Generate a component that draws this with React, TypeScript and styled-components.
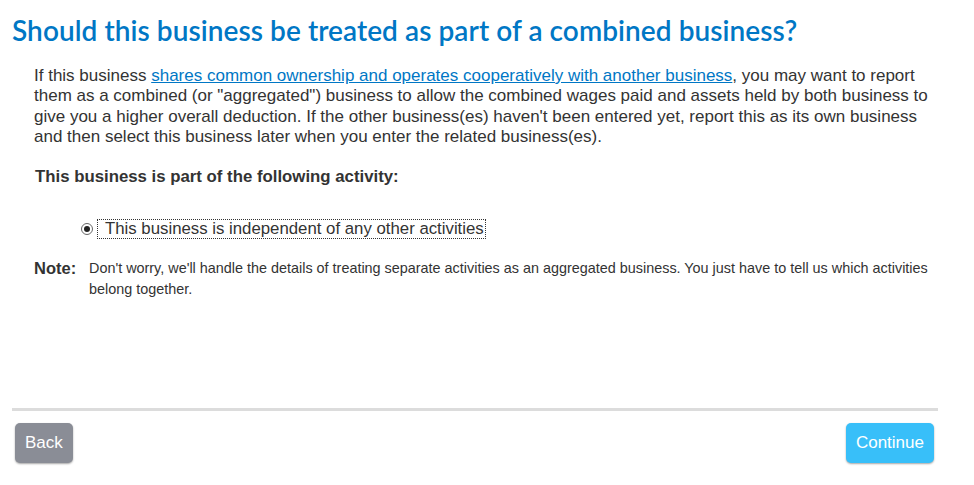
import React from "react";
import styled, { createGlobalStyle } from "styled-components";

const Global = createGlobalStyle`
  html, body { margin: 0; padding: 0; background: #fff; }
  body { font-family: "Liberation Sans", Arial, sans-serif; color: #333; }
`;

const Page = styled.div`
  width: 974px;
  height: 485px;
  box-sizing: border-box;
  padding: 14px 36px 0 12px;
  display: flex;
  flex-direction: column;
`;

const Title = styled.h1`
  margin: 0;
  font-family: "Lato", "Noto Sans", sans-serif;
  font-weight: 600;
  font-size: 28px;
  line-height: 32px;
  color: #0077c5;
  letter-spacing: 0.065px;
`;

const Body = styled.div`
  padding: 0 0 0 22px;
  margin-top: 20px;
  flex: 1;
`;

const Paragraph = styled.p`
  margin: 0;
  font-size: 17px;
  line-height: 20.4px;
  color: #333;
`;

const Link = styled.a`
  color: #0077c5;
  text-decoration: underline;
`;

const SectionLabel = styled.div`
  margin-top: 19px;
  font-weight: bold;
  font-size: 16.8px;
  line-height: 20px;
  padding-left: 1px;
`;

const RadioRow = styled.div`
  margin: 33px 0 0 47px;
  display: flex;
  align-items: center;
`;

const RadioDot = styled.span`
  width: 12px;
  height: 12px;
  border-radius: 50%;
  border: 1px solid #666;
  box-sizing: border-box;
  display: inline-flex;
  align-items: center;
  justify-content: center;
  margin-right: 5px;
  &::after {
    content: "";
    width: 6px;
    height: 6px;
    border-radius: 50%;
    background: #222;
  }
`;

const RadioLabel = styled.label`
  font-size: 16.8px;
  line-height: 18px;
  outline: 1px dotted #333;
  padding: 0 1px 0 7px;
`;

const NoteRow = styled.div`
  margin-top: 20px;
  display: flex;
  align-items: flex-start;
`;

const NoteLabel = styled.span`
  font-weight: bold;
  font-size: 16.5px;
  line-height: 20px;
  width: 55px;
  flex-shrink: 0;
`;

const NoteText = styled.span`
  font-size: 14.4px;
  line-height: 21px;
  color: #333;
`;

const Divider = styled.hr`
  margin: 0;
  border: none;
  height: 3px;
  background: #dcdcdc;
`;

const Footer = styled.div`
  display: flex;
  justify-content: space-between;
  padding: 12px 4px 22px 3px;
`;

const Button = styled.button<{ $primary?: boolean }>`
  height: 40px;
  padding: 0 10px;
  border: none;
  border-radius: 5px;
  font-family: "Liberation Sans", Arial, sans-serif;
  font-size: 17px;
  color: #fff;
  background: ${(p) => (p.$primary ? "#38bff9" : "#8a8d96")};
  box-shadow: 0 1px 2px rgba(0, 0, 0, 0.35);
`;

export default function App() {
  return (
    <>
      <Global />
      <Page>
        <Title>Should this business be treated as part of a combined business?</Title>
        <Body>
          <Paragraph>
            If this business{" "}
            <Link href="#">shares common ownership and operates cooperatively with another business</Link>, you may
            want to report them as a combined (or "aggregated") business to allow the combined wages paid and assets
            held by both business to give you a higher overall deduction. If the other business(es) haven't been
            entered yet, report this as its own business and then select this business later when you enter the
            related business(es).
          </Paragraph>
          <SectionLabel>This business is part of the following activity:</SectionLabel>
          <RadioRow>
            <RadioDot />
            <RadioLabel>This business is independent of any other activities</RadioLabel>
          </RadioRow>
          <NoteRow>
            <NoteLabel>Note:</NoteLabel>
            <NoteText>
              Don't worry, we'll handle the details of treating separate activities as an aggregated business. You
              just have to tell us which activities belong together.
            </NoteText>
          </NoteRow>
        </Body>
        <Divider />
        <Footer>
          <Button>Back</Button>
          <Button $primary>Continue</Button>
        </Footer>
      </Page>
    </>
  );
}
